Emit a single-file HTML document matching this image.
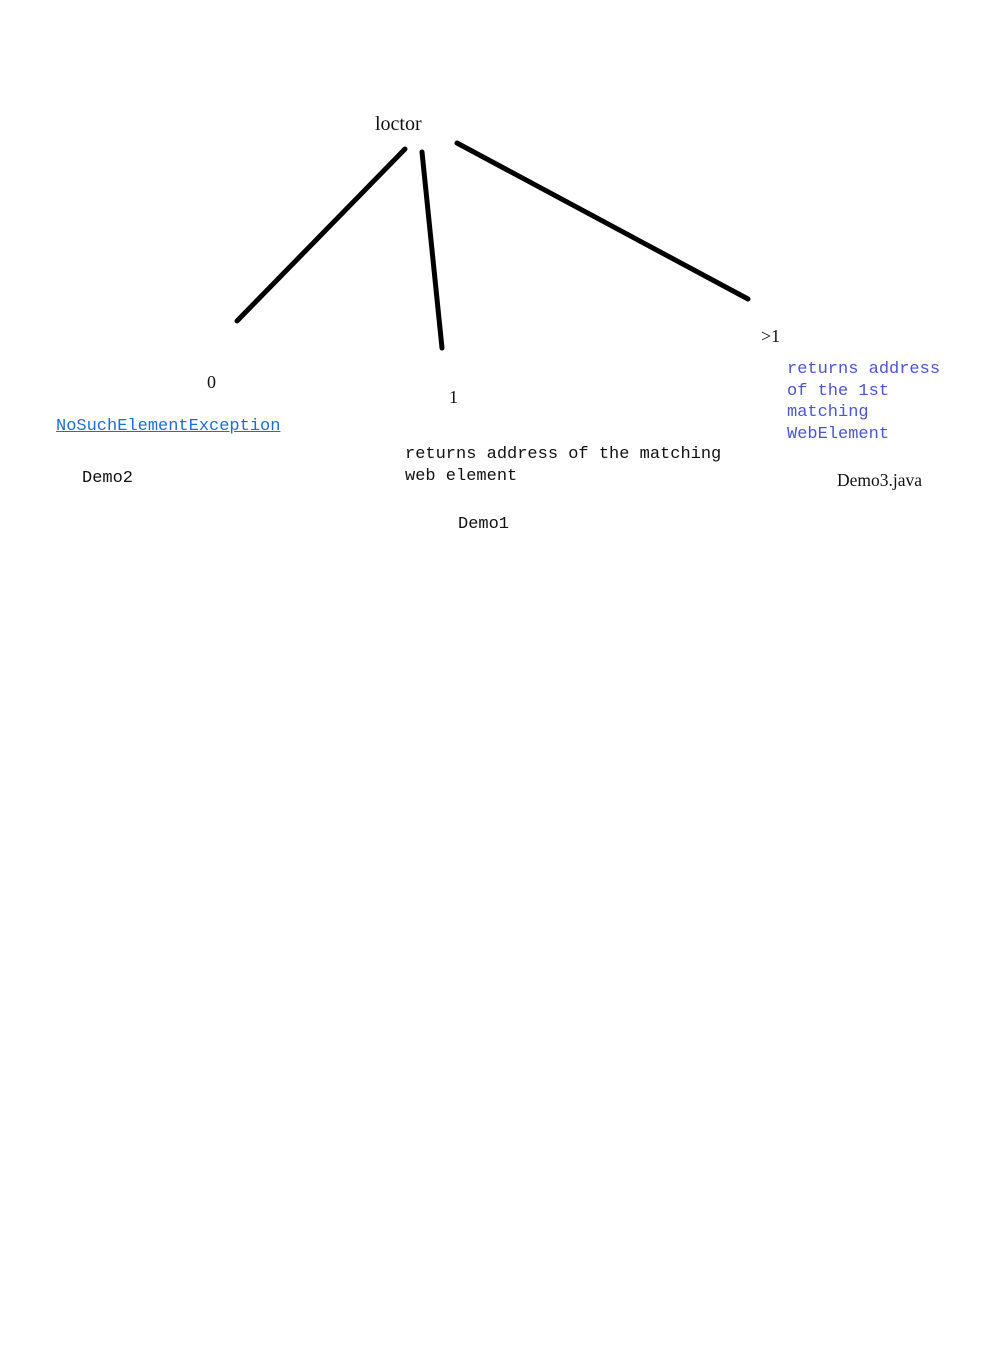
<!DOCTYPE html>
<html><head><style>
body{margin:0;width:998px;height:1372px;background:#fff;position:relative;overflow:hidden}
.m{position:absolute;font-family:"Liberation Mono",monospace;font-size:17px;line-height:22px;color:#111;white-space:pre}
.s{position:absolute;font-family:"Liberation Serif",serif;font-size:18px;line-height:20px;color:#111;white-space:pre}
</style></head><body>
<svg width="998" height="1372" style="position:absolute;left:0;top:0">
<g stroke="#000" stroke-width="5" stroke-linecap="round" fill="none">
<line x1="405" y1="149" x2="237" y2="321"/>
<line x1="422" y1="152" x2="442" y2="348"/>
<line x1="457" y1="143" x2="748" y2="299"/>
</g></svg>
<div class="s" style="left:375px;top:114px;font-size:20px">loctor</div>
<div class="s" style="left:207px;top:372px">0</div>
<div class="s" style="left:449px;top:387px">1</div>
<div class="s" style="left:761px;top:326px">&gt;1</div>
<div class="m" style="left:56px;top:416px;color:#1a6fd6;text-decoration:underline">NoSuchElementException</div>
<div class="m" style="left:82px;top:468px">Demo2</div>
<div class="m" style="left:405px;top:444px">returns address of the matching
web element</div>
<div class="m" style="left:458px;top:514px">Demo1</div>
<div class="m" style="left:787px;top:359px;color:#4b55d0;line-height:21.7px">returns address
of the 1st
matching
WebElement</div>
<div class="s" style="left:837px;top:470px;font-size:17.5px">Demo3.java</div>
</body></html>
